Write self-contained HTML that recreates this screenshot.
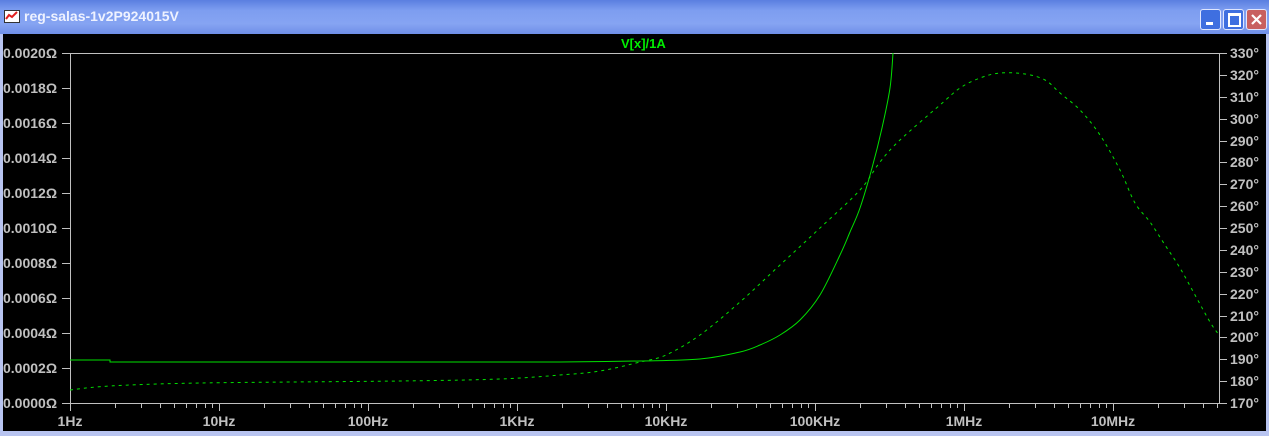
<!DOCTYPE html>
<html><head><style>
html,body{margin:0;padding:0;width:1269px;height:436px;overflow:hidden;background:#b8c4f0}
#tb{position:absolute;left:0;top:0;width:1269px;height:34px;background:linear-gradient(#5a7fe0,#7d9df0 30%,#86a4f2 70%,#6f8fe8)}
#tt{position:absolute;left:24px;top:8px;font:bold 14px "Liberation Sans",sans-serif;color:#eef2ff}
.btn{position:absolute;top:9px;width:19px;height:19px;border:1px solid #dfe6ff;border-radius:3px;background:#3f6fe0}
#plot{position:absolute;left:3px;top:34px;width:1263px;height:397px;background:#000}
</style></head><body>
<div id="tb">
<svg style="position:absolute;left:4px;top:10px" width="16" height="14"><rect x="0.5" y="0.5" width="15" height="12" fill="#fff" stroke="#333"/><polyline points="2,9 5,5 8,7 13,2" fill="none" stroke="#e02020" stroke-width="2"/></svg>
<div id="tt">reg-salas-1v2P924015V</div>
<div class="btn" style="left:1200px"><div style="position:absolute;left:5px;top:12px;width:7px;height:3px;background:#fff"></div></div>
<div class="btn" style="left:1223px"><div style="position:absolute;left:4px;top:3px;width:9px;height:9px;border:2px solid #fff;border-top-width:3px"></div></div>
<div class="btn" style="left:1246px;background:#c86060"><svg width="19" height="19"><path d="M5 5L14 14M14 5L5 14" stroke="#fff" stroke-width="2.2"/></svg></div>
</div>
<div id="plot"></div>
<svg id="s" style="position:absolute;left:0;top:0" width="1269" height="436" font-family="Liberation Sans,sans-serif" font-weight="bold">
<g id="ax" stroke="#c0c0c0" stroke-width="1" fill="none">
<path d="M70.5 53.5H1219.5M70.5 53V403M1219.5 53V403M70 403.5H1220"/>
</g>
<g id="lab" fill="#c0c0c0" font-size="14"></g>
<text x="621" y="48" fill="#00ee00" font-size="13">V[x]/1A</text>
<path id="c1" fill="none" stroke="#00e000" stroke-width="1"/>
<path id="c2" fill="none" stroke="#00e000" stroke-width="1" stroke-dasharray="3,4"/>
</svg>
<script>
var ax=document.getElementById('ax'),lab=document.getElementById('lab'),ns='http://www.w3.org/2000/svg';
function el(p,t,a,txt){var e=document.createElementNS(ns,t);for(var k in a)e.setAttribute(k,a[k]);if(txt)e.textContent=txt;p.appendChild(e);}
var dec=['1Hz','10Hz','100Hz','1KHz','10KHz','100KHz','1MHz','10MHz'];
for(var d=0;d<8;d++){var x0=70+d*149;el(ax,'path',{d:'M'+(x0+.5)+' 403V411'});
el(lab,'text',{x:x0,y:426,'text-anchor':'middle'},dec[d]);
for(var m=2;m<10;m++){var x=Math.round(x0+Math.log10(m)*149);if(x<=1219)el(ax,'path',{d:'M'+(x+.5)+' 403V408'});}}
for(var i=0;i<=10;i++){var y=Math.round(53+i*35);el(ax,'path',{d:'M62 '+(y+.5)+'H70'});
el(lab,'text',{x:3,y:y+5},'0.00'+('0'+(20-2*i)).slice(-2)+'\u03a9');}
for(var i=0;i<=16;i++){var y=Math.round(53+i*21.875);el(ax,'path',{d:'M1219 '+(y+.5)+'H1227'});
el(lab,'text',{x:1230,y:y+5},(330-10*i)+'\u00b0');}
function cr(p){var d='M'+p[0]+' '+p[1];for(var i=0;i<p.length-2;i+=2){
var x0=p[i-2]!==undefined?p[i-2]:p[i],y0=p[i-1]!==undefined?p[i-1]:p[i+1];
var x1=p[i],y1=p[i+1],x2=p[i+2],y2=p[i+3];
var x3=p[i+4]!==undefined?p[i+4]:x2,y3=p[i+5]!==undefined?p[i+5]:y2;
d+=' C'+(x1+(x2-x0)/6)+' '+(y1+(y2-y0)/6)+' '+(x2-(x3-x1)/6)+' '+(y2-(y3-y1)/6)+' '+x2+' '+y2;}return d;}
document.getElementById('c1').setAttribute('d','M70 360H110V362H560 '+cr([560,362,640,361,700,359,740,352,760,345,780,335,800,320,820,295,840,255,850,232,860,208,872,168,882,128,890,88,893,53]).slice(1).replace(/^[^C]*/,''));
document.getElementById('c2').setAttribute('d',cr([70,390,110,386,200,383,400,381,500,379,560,375,600,371,640,362,666,355,700,335,740,302,780,265,820,228,860,190,880,162,900,140,940,105,960,88,980,78,1000,73,1025,74,1045,80,1060,93,1080,110,1100,135,1120,170,1135,203,1150,222,1165,245,1180,268,1195,295,1210,322,1219,335]));
</script>
</body></html>
